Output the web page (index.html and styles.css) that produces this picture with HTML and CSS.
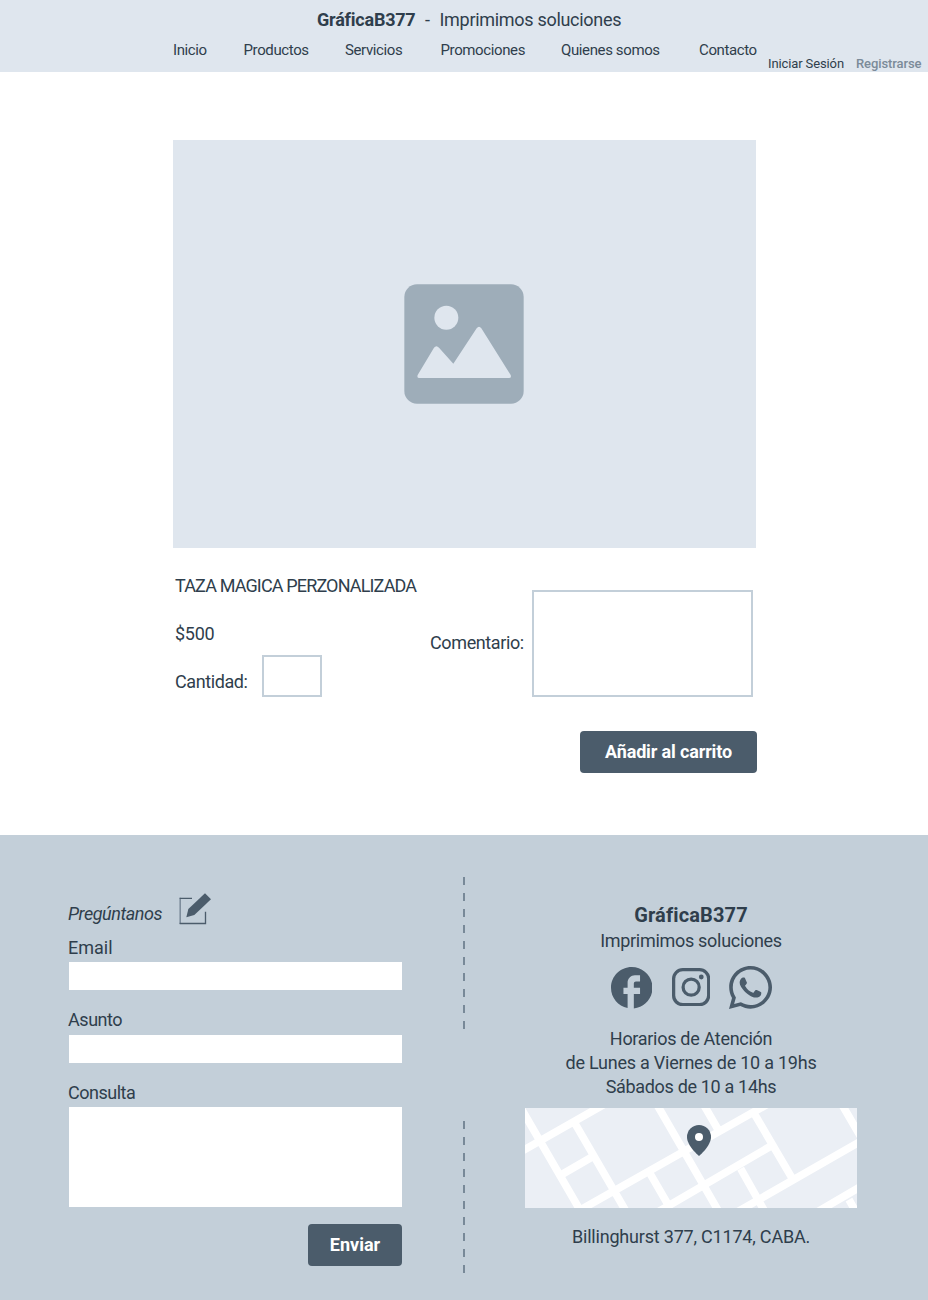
FILE: index.html
```html
<!DOCTYPE html>
<html lang="es">
<head>
<meta charset="utf-8">
<title>GráficaB377 - Imprimimos soluciones</title>
<link rel="stylesheet" href="styles.css">
</head>
<body>
<header class="header">
  <div class="header-main">
    <div class="brand"><strong class="brand-name">GráficaB377</strong><span class="brand-dash">-</span><span class="brand-tag">Imprimimos soluciones</span></div>
    <nav class="nav">
      <a class="nav-link">Inicio</a>
      <a class="nav-link">Productos</a>
      <a class="nav-link">Servicios</a>
      <a class="nav-link">Promociones</a>
      <a class="nav-link">Quienes somos</a>
      <a class="nav-link">Contacto</a>
    </nav>
  </div>
  <div class="account"><a class="login">Iniciar Sesión</a><a class="register">Registrarse</a></div>
</header>

<main class="product">
  <div class="photo">
    <svg class="photo-icon" viewBox="41 41 360 360">
      <rect class="icon-frame" x="42" y="42" width="358" height="358" rx="38"/>
      <circle class="icon-cut" cx="168" cy="142" r="36"/>
      <path class="icon-cut" d="M82 314L131 232Q138 223 146 232L189 280L259 174Q266 165 273 174L361 314Q364 323 356 323H87Q79 323 82 314Z"/>
    </svg>
  </div>
  <div class="details">
    <div class="info">
      <div class="name">TAZA MAGICA PERZONALIZADA</div>
      <div class="price">$500</div>
      <div class="quantity"><label class="quantity-label">Cantidad:</label><div class="quantity-box"></div></div>
    </div>
    <label class="comment-label">Comentario:</label>
    <div class="comment-box"></div>
  </div>
  <button class="button add">Añadir al carrito</button>
</main>

<footer class="footer">
  <form class="ask">
    <div class="ask-head"><em class="ask-title">Pregúntanos</em>
      <svg class="edit-icon" viewBox="42 39 96 96">
        <path class="edit-left" d="M45.500 53V132"/>
        <path class="edit-line" d="M44 55H81M121.500 95V130.500H44"/>
        <path class="solid" d="M64 112L70 87L120 40L138 58L88 105Z"/>
      </svg>
    </div>
    <label class="field-label email">Email</label>
    <div class="field"></div>
    <label class="field-label asunto">Asunto</label>
    <div class="field"></div>
    <label class="field-label consulta">Consulta</label>
    <div class="field area"></div>
    <button class="button send" type="button">Enviar</button>
  </form>
  <div class="divider"><div class="dashes"></div><div class="dashes"></div></div>
  <section class="contact">
    <strong class="contact-name">GráficaB377</strong>
    <span class="contact-tag">Imprimimos soluciones</span>
    <div class="social">
      <svg class="facebook" viewBox="2 2 20 20"><path class="solid" d="M22 12c0-5.520-4.480-10-10-10S2 6.480 2 12c0 4.840 3.440 8.870 8 9.800V15H8v-3h2V9.500C10 7.570 11.570 6 13.500 6H16v3h-2c-.55 0-1 .45-1 1v2h3v3h-3v6.950c5.050-.5 9-4.760 9-9.950z"/></svg>
      <svg class="instagram" viewBox="2 2 20 20"><rect class="outline" x="2.850" y="2.850" width="18.300" height="18.300" rx="4.800"/><circle class="outline" cx="12" cy="12" r="4.200"/><circle class="solid" cx="17.300" cy="6.700" r="1.250"/></svg>
      <svg class="whatsapp" viewBox="0 32 448 448"><path class="solid" d="M380.900 97.100C339 55.100 283.200 32 223.900 32c-122.400 0-222 99.600-222 222 0 39.100 10.200 77.300 29.600 111L0 480l117.700-30.900c32.400 17.700 68.900 27 106.100 27h.1c122.300 0 224.100-99.600 224.100-222 0-59.300-25.200-115-67.100-157zm-157 341.600c-33.200 0-65.700-8.900-94-25.700l-6.700-4-69.800 18.300L72 359.200l-4.400-7c-18.500-29.400-28.200-63.300-28.200-98.200 0-101.700 82.800-184.500 184.600-184.500 49.300 0 95.600 19.200 130.400 54.100 34.800 34.900 56.200 81.200 56.100 130.500 0 101.800-84.900 184.600-186.600 184.600zm101.200-138.200c-5.500-2.800-32.800-16.200-37.900-18-5.100-1.900-8.800-2.800-12.500 2.800-3.700 5.600-14.300 18-17.600 21.800-3.200 3.700-6.500 4.200-12 1.400-32.600-16.300-54-29.100-75.500-66-5.700-9.800 5.700-9.100 16.300-30.300 1.800-3.700.9-6.900-.5-9.700-1.400-2.800-12.500-30.100-17.100-41.200-4.500-10.800-9.100-9.300-12.500-9.300-3.200-.2-6.900-.2-10.600-.2-3.700 0-9.700 1.400-14.800 6.900-5.100 5.600-19.400 19-19.400 46.300 0 27.300 19.900 53.700 22.600 57.400 2.800 3.700 39.100 59.700 94.800 83.800 35.200 15.200 49 16.500 66.600 13.900 10.700-1.600 32.800-13.400 37.400-26.400 4.600-13 4.600-24.100 3.200-26.400-1.300-2.500-5-3.900-10.500-6.600z"/></svg>
    </div>
    <div class="hours">
      <span class="hours-title">Horarios de Atención</span>
      <span class="hours-week">de Lunes a Viernes de 10 a 19hs</span>
      <span class="hours-sat">Sábados de 10 a 14hs</span>
    </div>
    <svg class="map" viewBox="0 0 996 300">
      <path class="road" d="M-10 130L236 -10M155 312L725 -10M395 314L745 110M640 310L1010 98M880 310L1010 234M-18 -10L166 308M152 50L303 310M115 197L203 146M396 -10L582 312M377 200L428 288M536 -10L580 66M685 12L802 212M647 182L719 310M951 -10L1006 84M972 275L992 310"/>
      <path class="solid" d="M522 51a36 36 0 0 1 36 36c0 27-36 57-36 57s-36-30-36-57a36 36 0 0 1 36-36z"/>
      <circle class="pin-hole" cx="522" cy="87" r="12"/>
    </svg>
    <span class="address">Billinghurst 377, C1174, CABA.</span>
  </section>
</footer>
</body>
</html>
```
FILE: styles.css
```css
* { box-sizing: border-box; }
body {
  margin: 0;
  width: 928px;
  background: #fff;
  color: #2f3e4c;
  font: 18px/24px Roboto, "Liberation Sans", sans-serif;
  white-space: nowrap;
}

.header {
  display: grid;
  grid-template-columns: 583px 1fr;
  height: 72px;
  padding: 8px 0 0 173px;
  background: #dfe6ee;
}
.brand { display: flex; padding-left: 144px; }
.brand-name { width: 108px; letter-spacing: -0.22px; }
.brand-dash { width: 14.500px; }
.brand-tag { letter-spacing: -0.3px; }
.nav {
  display: grid;
  grid-template-columns: 70.500px 101.500px 95.500px 120.500px 138px auto;
  margin-top: 7px;
  font-size: 15px;
  line-height: 22px;
  letter-spacing: -0.38px;
}
.account {
  display: flex;
  align-self: end;
  padding-left: 12px;
  font-size: 13px;
  line-height: 17px;
}
.login { width: 88px; letter-spacing: -0.12px; }
.register { color: #7b8b99; font-weight: 500; letter-spacing: -0.1px; }

.product {
  display: flex;
  flex-direction: column;
  height: 763px;
  padding: 68px 171px 0 173px;
}
.photo {
  display: grid;
  place-items: center;
  width: 583px;
  height: 408px;
  padding-right: 2px;
  background: #dfe6ee;
}
.photo-icon { width: 120px; height: 120px; }
.icon-frame { fill: #9eadb9; }
.icon-cut { fill: #dfe6ee; }
.details {
  display: grid;
  grid-template-columns: 255px 102px 221px;
  height: 149px;
  padding: 26px 0 0 2px;
}
.name { margin-bottom: 24px; letter-spacing: -0.85px; }
.price { margin-bottom: 9px; letter-spacing: -0.25px; }
.quantity { display: flex; }
.quantity-label { width: 87px; padding-top: 15px; letter-spacing: -0.4px; }
.quantity-box { width: 60px; height: 42px; border: 2px solid #c3cfd9; }
.comment-label { padding-top: 57px; letter-spacing: -0.38px; }
.comment-box { height: 107px; margin-top: 16px; border: 2px solid #c3cfd9; }
.button {
  border: 0;
  border-radius: 4px;
  padding: 0;
  height: 42px;
  background: #4b5c6b;
  color: #fff;
  font: bold 18px/42px Roboto, "Liberation Sans", sans-serif;
}
.add { width: 177px; margin-top: 34px; align-self: flex-end; letter-spacing: -0.14px; }

.footer {
  display: grid;
  grid-template-columns: 333px 2px 332px;
  justify-content: start;
  column-gap: 61px;
  height: 465px;
  padding-left: 69px;
  background: #c3cfd9;
}
.ask { display: flex; flex-direction: column; padding-top: 58px; }
.ask-head { display: flex; height: 42px; }
.ask-title { width: 111px; padding-top: 9px; margin-left: -1px; letter-spacing: -0.43px; }
.edit-icon { width: 32px; height: 32px; }
.edit-left, .edit-line { fill: none; stroke: #4b5c6b; stroke-width: 4; }
.edit-left { stroke: #708090; }
.solid { fill: #4b5c6b; }
.field-label { height: 27px; margin-left: -1px; padding-top: 0.500px; }
.asunto { margin-top: 17.500px; letter-spacing: -0.45px; }
.consulta { margin-top: 17.500px; letter-spacing: -0.5px; }
.field { width: 333px; height: 28px; background: #fff; }
.area { height: 100px; }
.send { width: 94px; margin-top: 17px; align-self: flex-end; }

.divider { display: flex; flex-direction: column; gap: 92px; padding-top: 42px; }
.dashes {
  height: 152px;
  background: repeating-linear-gradient(#788998 0 8px, transparent 8px 16px);
}

.contact {
  display: flex;
  flex-direction: column;
  align-items: center;
  padding-top: 68px;
  margin: 0 1px 0 -1px;
}
.contact-name { font-size: 20px; letter-spacing: 0.15px; }
.contact-tag { margin-top: 2px; letter-spacing: -0.3px; }
.social { display: flex; align-items: center; height: 44px; margin: 12px 0 0 1px; }
.facebook { width: 41.500px; height: 41.500px; margin: 1.500px 19.500px 0 0; }
.instagram { width: 38.300px; height: 38.300px; margin-right: 19.400px; }
.whatsapp { width: 43px; height: 43px; }
.outline { fill: none; stroke: #4b5c6b; stroke-width: 1.700; }
.hours { display: flex; flex-direction: column; align-items: center; margin-top: 18px; }
.hours-title { letter-spacing: -0.3px; }
.hours-week { letter-spacing: -0.23px; }
.hours-sat { letter-spacing: -0.33px; }
.map { width: 332px; height: 100px; margin-top: 9px; background: #ebeff5; }
.road { fill: none; stroke: #fff; stroke-width: 23; }
.pin-hole { fill: #fff; }
.address { margin-top: 17px; letter-spacing: -0.2px; }
```
